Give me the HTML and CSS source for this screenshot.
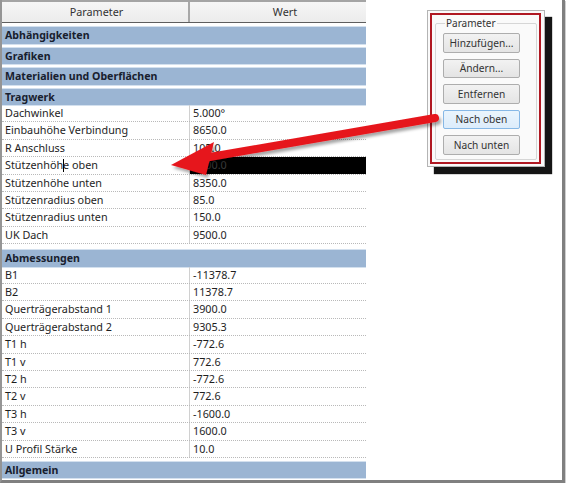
FILE: index.html
```html
<!DOCTYPE html>
<html lang="de">
<head>
  <meta charset="UTF-8" />
  <title>Eigenschaften</title>
  <link rel="stylesheet" href="styles.css">
</head>
<body>
  <div class="frame">
    <div class="grid">
      <div class="grid-head">
        <div class="hcell key">Parameter</div>
        <div class="hcell wert">Wert</div>
      </div>

      <div class="cat">Abhängigkeiten</div>
      <div class="cat">Grafiken</div>
      <div class="cat">Materialien und Oberflächen</div>
      <div class="cat">Tragwerk</div>
      <div class="row"><div class="key">Dachwinkel</div><div class="val">5.000°</div></div>
      <div class="row"><div class="key">Einbauhöhe Verbindung</div><div class="val">8650.0</div></div>
      <div class="row"><div class="key">R Anschluss</div><div class="val">105.0</div></div>
      <div class="row"><div class="key">Stützenhöh<span class="caret"></span>e oben</div><div class="val sel">8500.0</div></div>
      <div class="row"><div class="key">Stützenhöhe unten</div><div class="val">8350.0</div></div>
      <div class="row"><div class="key">Stützenradius oben</div><div class="val">85.0</div></div>
      <div class="row"><div class="key">Stützenradius unten</div><div class="val">150.0</div></div>
      <div class="row"><div class="key">UK Dach</div><div class="val">9500.0</div></div>

      <div class="cat cat-wide">Abmessungen</div>
      <div class="row"><div class="key">B1</div><div class="val">-11378.7</div></div>
      <div class="row"><div class="key">B2</div><div class="val">11378.7</div></div>
      <div class="row"><div class="key">Querträgerabstand 1</div><div class="val">3900.0</div></div>
      <div class="row"><div class="key">Querträgerabstand 2</div><div class="val">9305.3</div></div>
      <div class="row"><div class="key">T1 h</div><div class="val">-772.6</div></div>
      <div class="row"><div class="key">T1 v</div><div class="val">772.6</div></div>
      <div class="row"><div class="key">T2 h</div><div class="val">-772.6</div></div>
      <div class="row"><div class="key">T2 v</div><div class="val">772.6</div></div>
      <div class="row"><div class="key">T3 h</div><div class="val">-1600.0</div></div>
      <div class="row"><div class="key">T3 v</div><div class="val">1600.0</div></div>
      <div class="row"><div class="key">U Profil Stärke</div><div class="val">10.0</div></div>

      <div class="cat">Allgemein</div>
    </div>

    <div class="side">
      <div class="dialog">
        <div class="dialog-mark">
          <fieldset class="group">
            <legend>Parameter</legend>
            <button type="button">Hinzufügen...</button>
            <button type="button">Ändern...</button>
            <button type="button">Entfernen</button>
            <button type="button" class="hot">Nach oben</button>
            <button type="button">Nach unten</button>
          </fieldset>
        </div>
      </div>
    </div>

    <!-- Hinweispfeil: vom Button "Nach oben" zur Zeile -->
    <svg class="arrow" width="567" height="484" viewBox="0 0 567 484">
      <defs>
        <filter id="shade" x="-10%" y="-30%" width="130%" height="180%">
          <feDropShadow dx="2" dy="3" stdDeviation="1.6" flood-color="#000" flood-opacity="0.35"/>
        </filter>
      </defs>
      <g filter="url(#shade)" fill="#e6161c">
        <line x1="204" y1="158" x2="435" y2="118" stroke="#e6161c" stroke-width="8" stroke-linecap="round"/>
        <polygon points="171,165 214,142 206,175"/>
      </g>
    </svg>
  </div>
</body>
</html>
```

FILE: styles.css
```css
* {
  box-sizing: border-box;
}

body {
  margin: 0;
  background: #fff;
  font-family: "Noto Sans", "Open Sans", sans-serif;
  font-size: 10.8px;
  color: #1e1e1e;
}

.frame {
  position: relative;
  display: flex;
  width: 565px;
  height: 483px;
  border-left: 2px solid #959595;
  border-right: 3px solid #808080;
  border-bottom: 3px solid #808080;
  box-shadow: 1px 1px 0 #cfcfcf;
}

/* Eigenschaftentabelle */
.grid {
  width: 364px;
  border-top: 2px solid #a4a4a4;
}

.grid-head {
  display: flex;
  height: 21px;
  background: linear-gradient(#f6f6f6, #ececec);
  border-bottom: 1px solid #5e5e5e;
  color: #333;
  font-size: 10.8px;
}

.hcell {
  line-height: 20px;
  text-align: center;
}

.hcell.key {
  border-right: 2px solid #a8a8a8;
}

.hcell.wert {
  flex: 1;
  padding-left: 14px;
}

.cat {
  height: 16.5px;
  margin-top: 4px;
  padding-left: 3px;
  background: #9bb5d3;
  box-shadow: 0 -1px 0 #d3e0ee, 0 1px 0 #d3e0ee;
  font-weight: bold;
  font-size: 10.6px;
  line-height: 16.5px;
  color: #18202e;
}

.cat-wide {
  margin-top: 6px;
}

.row {
  display: flex;
  height: 17.4px;
  border-bottom: 1px dotted #b9b9b9;
  line-height: 16.4px;
}

.key {
  width: 188px;
  flex: none;
  padding-left: 3px;
  border-right: 1px solid #d0d0d0;
  white-space: nowrap;
}

.val {
  flex: 1;
  padding-left: 3px;
}

.val.sel {
  background: #000;
  color: #3c3c3c;
}

.caret {
  display: inline-block;
  width: 1px;
  height: 13px;
  margin-right: -1px;
  vertical-align: -3px;
  background: #000;
}

/* Dialogausschnitt rechts */
.side {
  flex: 1;
  padding: 10px 0 0 61px;
}

.dialog {
  width: 118px;
  height: 157px;
  padding: 2px 3px 2px 2px;
  background: #fafafa;
  border: 1px solid #b4b4b4;
  box-shadow: 7px 7px 1px #151515;
}

.dialog-mark {
  height: 100%;
  padding: 3px 2px 0 3px;
  border: 2px solid #b01822;
}

.group {
  margin: 0;
  padding: 4px 0 0 7px;
  height: 142px;
  min-width: 0;
  border: 1px solid #d6d6d6;
  border-radius: 2px;
}

.group legend {
  padding: 0 1px;
  margin-left: 2px;
  font-size: 10px;
  line-height: 11px;
  color: #333;
}

.group button {
  display: block;
  width: 77px;
  height: 19.5px;
  margin-bottom: 6px;
  padding: 0;
  font-family: inherit;
  font-size: 10.2px;
  color: #333;
  background: linear-gradient(#f2f2f2, #e4e4e4);
  border: 1px solid #adadad;
  border-radius: 2px;
}

.group button.hot {
  background: linear-gradient(#eaf5fd, #dcecfb);
  border-color: #86b8e6;
}

.arrow {
  position: absolute;
  left: -2px;
  top: 0;
  pointer-events: none;
}
```
